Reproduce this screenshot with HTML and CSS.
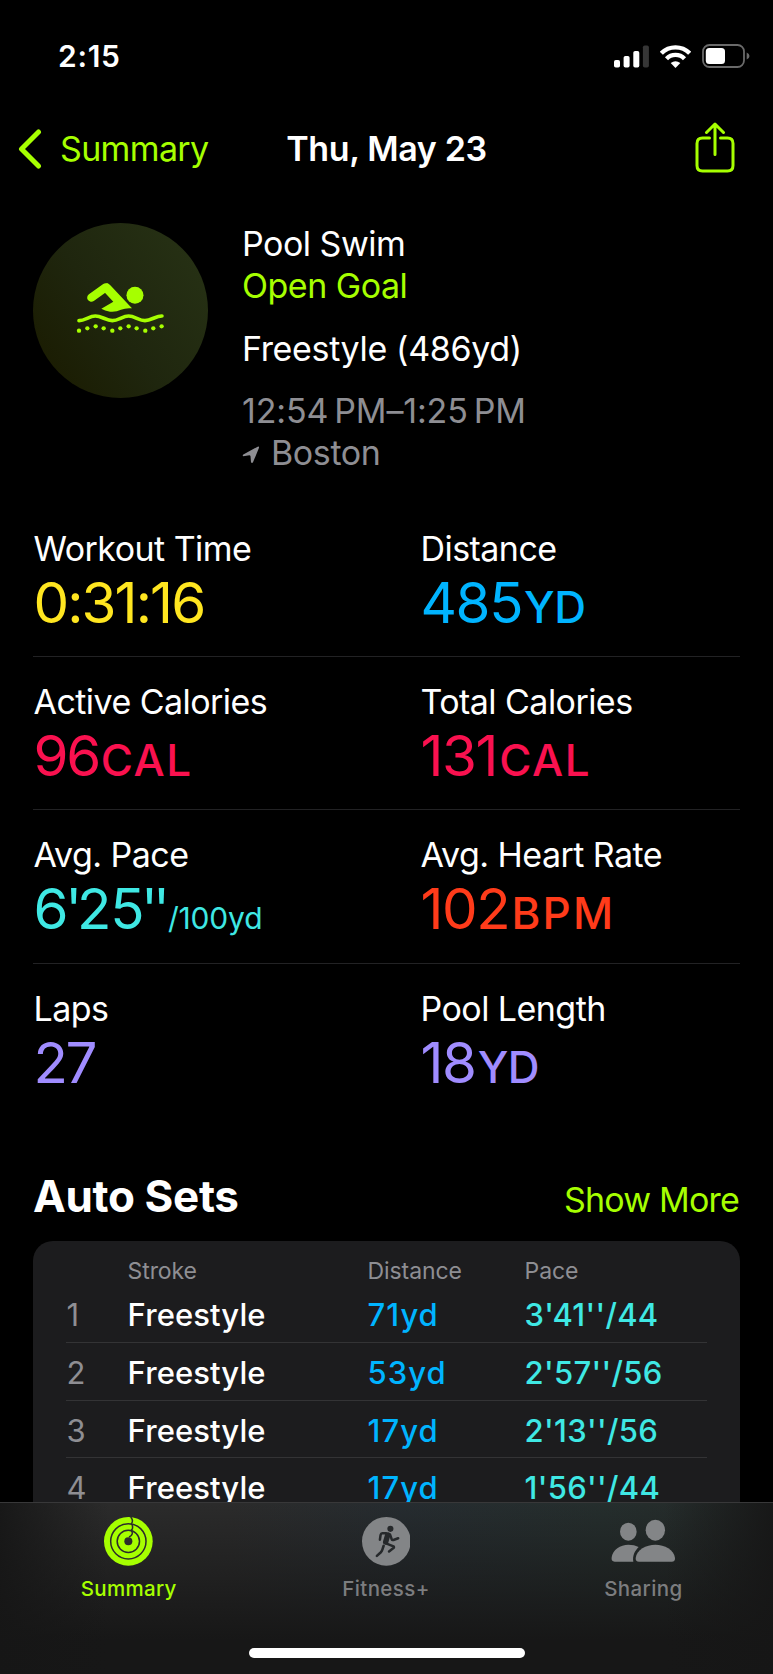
FILE: index.html
```
<!DOCTYPE html>
<html lang="en">
<head>
    <meta charset="UTF-8">
    <meta name="viewport" content="width=device-width, initial-scale=1.0">
    <title>Pool Swim - Thu, May 23</title>
    <link rel="stylesheet" href="styles.css">
</head>
<body>

    <div class="phone">
        <!-- Status bar -->
        <div class="status-bar">
            <span class="time">2:15</span>
            <div class="status-icons">
                <svg class="signal" viewBox="0 0 35 23">
                    <rect x="0" y="15" width="6" height="7.5" rx="1.8" fill="#fff"/>
                    <rect x="9.6" y="11" width="6" height="11.5" rx="1.8" fill="#fff"/>
                    <rect x="19.3" y="6" width="6" height="16.5" rx="1.8" fill="#fff"/>
                    <rect x="28.9" y="0.5" width="6" height="22" rx="1.8" fill="#363636"/>
                </svg>
                <svg class="wifi" viewBox="0 0 93 69">
                    <g fill="none" stroke="#fff" stroke-width="13">
                        <path d="M4 25C27 1 66 1 89 25"/>
                        <path d="M19.500 41C34 26 59 26 73.500 41"/>
                    </g>
                    <path d="M32 54Q46.500 43 61 54L46.500 69Z" fill="#fff"/>
                </svg>
                <svg class="battery" viewBox="0 0 48 24">
                    <rect x="1" y="1" width="41" height="22" rx="6.500" fill="none" stroke="#6a6a6a" stroke-width="1.8"/>
                    <rect x="3.800" y="3.900" width="19.200" height="16" rx="3.500" fill="#fff"/>
                    <path d="M44.700 8.500Q47.500 9.500 47.500 12T44.700 15.500Z" fill="#6a6a6a"/>
                </svg>
            </div>
        </div>

        <!-- Navigation -->
        <div class="nav">
            <a class="back">
                <svg class="chevron" viewBox="0 0 24 40"><path d="M20.500 3L3.500 20L20.500 37"/></svg>
                <span>Summary</span>
            </a>
            <h1>Thu, May 23</h1>
            <svg class="share" viewBox="0 0 40 52">
                <path d="M14.500 16H7.500Q2 16 2 21.500V43.500Q2 49 7.500 49H32.500Q38 49 38 43.500V21.500Q38 16 32.500 16H25.500"/>
                <path d="M20 32.500V2.500M11.500 10.500L20 2L28.500 10.500"/>
            </svg>
        </div>

        <!-- Workout info -->
        <div class="workout">
            <div class="badge">
                <svg class="swimmer" viewBox="170 215 268 160">
                    <path d="M216 265L259 234" stroke-width="25"/>
                    <path d="M262 221Q268 222 273 228L338 297Q320 295 305 301Q290 309 272 307Q256 304 246 298L282 277L254 247Z" class="solid"/>
                    <circle cx="347" cy="258" r="25.500" class="solid"/>
                    <path d="M179 334C197 334 210 320 228 320S261 334 279 334S310 320 328 320S359 334 377 334S410 320 428 320" stroke-width="11"/>
                    <g class="solid">
                        <circle cx="179" cy="364" r="6.500"/>
                        <circle cx="204" cy="357" r="6.500"/>
                        <circle cx="229" cy="351" r="6.500"/>
                        <circle cx="253" cy="357" r="6.500"/>
                        <circle cx="279" cy="364" r="6.500"/>
                        <circle cx="303" cy="357" r="6.500"/>
                        <circle cx="328" cy="351" r="6.500"/>
                        <circle cx="352" cy="357" r="6.500"/>
                        <circle cx="378" cy="364" r="6.500"/>
                        <circle cx="402" cy="357" r="6.500"/>
                        <circle cx="427" cy="351" r="6.500"/>
                    </g>
                </svg>
            </div>
            <div class="info">
                <p>Pool Swim</p>
                <p class="goal">Open Goal</p>
                <p class="stroke-type">Freestyle (486yd)</p>
                <p class="muted hours">12:54&#8201;PM–1:25&#8201;PM</p>
                <p class="muted place">
                    <svg class="arrow" viewBox="0 0 54 54"><path d="M4 25.500L47 2Q52 0 51 5L33 49Q30 53 27 49L25.500 31Q25 28 22 28L4 30.500Q0 29 4 25.500Z"/></svg>
                    <span>Boston</span>
                </p>
            </div>
        </div>

        <!-- Stats -->
        <div class="stats">
            <div class="stat-row">
                <div class="stat">
                    <div class="label">Workout Time</div>
                    <div class="value yellow clock">0:31:16</div>
                </div>
                <div class="stat">
                    <div class="label">Distance</div>
                    <div class="value blue">485<span class="unit">YD</span></div>
                </div>
            </div>
            <div class="stat-row">
                <div class="stat">
                    <div class="label">Active Calories</div>
                    <div class="value pink short">96<span class="unit wide">CAL</span></div>
                </div>
                <div class="stat">
                    <div class="label">Total Calories</div>
                    <div class="value pink">131<span class="unit wide">CAL</span></div>
                </div>
            </div>
            <div class="stat-row">
                <div class="stat">
                    <div class="label">Avg. Pace</div>
                    <div class="value teal">6<span class="tick">'</span>25<span class="tick">''</span><span class="per">/100yd</span></div>
                </div>
                <div class="stat">
                    <div class="label">Avg. Heart Rate</div>
                    <div class="value red">102<span class="unit wider">BPM</span></div>
                </div>
            </div>
            <div class="stat-row">
                <div class="stat">
                    <div class="label">Laps</div>
                    <div class="value purple short">27</div>
                </div>
                <div class="stat">
                    <div class="label">Pool Length</div>
                    <div class="value purple">18<span class="unit">YD</span></div>
                </div>
            </div>
        </div>

        <!-- Auto sets -->
        <div class="section-head">
            <h2>Auto Sets</h2>
            <a class="more">Show More</a>
        </div>
        <div class="card">
            <div class="set-row set-head">
                <span></span>
                <span>Stroke</span>
                <span>Distance</span>
                <span>Pace</span>
            </div>
            <div class="set-row">
                <span class="num">1</span>
                <span>Freestyle</span>
                <span class="dist">71yd</span>
                <span class="pace">3'41''/44</span>
            </div>
            <div class="set-row">
                <span class="num">2</span>
                <span>Freestyle</span>
                <span class="dist">53yd</span>
                <span class="pace">2'57''/56</span>
            </div>
            <div class="set-row">
                <span class="num">3</span>
                <span>Freestyle</span>
                <span class="dist">17yd</span>
                <span class="pace">2'13''/56</span>
            </div>
            <div class="set-row">
                <span class="num">4</span>
                <span>Freestyle</span>
                <span class="dist">17yd</span>
                <span class="pace">1'56''/44</span>
            </div>
        </div>

        <!-- Tab bar -->
        <div class="tab-bar">
            <div class="tabs">
                <div class="tab active">
                    <svg class="tab-icon" viewBox="0 0 146 146">
                        <circle cx="73" cy="73" r="73" fill="#a6ff00"/>
                        <g fill="none" stroke="#2b2b2b" stroke-width="4.500">
                            <circle cx="73" cy="73" r="53"/>
                            <circle cx="73" cy="73" r="33.500"/>
                            <path d="M80 0C87 8 87 14 82 20C87 27 87 34 82 40C87 47 86 55 75 60"/>
                        </g>
                        <circle cx="73" cy="73" r="12" fill="#2b2b2b"/>
                    </svg>
                    <span>Summary</span>
                </div>
                <div class="tab">
                    <svg class="tab-icon" viewBox="1083 82 144 144">
                        <circle cx="1155" cy="154" r="72" fill="#838587"/>
                        <g fill="none" stroke="#26292b" stroke-width="7.500" stroke-linecap="round" stroke-linejoin="round">
                            <circle cx="1167" cy="117" r="9" fill="#26292b" stroke="none"/>
                            <path d="M1154 130H1143Q1139 130 1138 135L1136 149"/>
                            <path d="M1166 134L1171 148Q1172 151 1176 150L1190 145"/>
                            <path d="M1159 135L1153 156" stroke-width="16"/>
                            <path d="M1154 160L1176 169Q1179 171 1176 174L1163 184"/>
                            <path d="M1147 167L1143 179Q1142 183 1138 187L1127 197"/>
                        </g>
                    </svg>
                    <span>Fitness+</span>
                </div>
                <div class="tab">
                    <svg class="tab-icon people" viewBox="862 82 200 146">
                        <g fill="#838587">
                            <ellipse cx="917" cy="126" rx="25" ry="27"/>
                            <ellipse cx="998" cy="121.500" rx="29" ry="31.500"/>
                            <path d="M949 216Q938 216 939 205C942 180 970 165 998 165S1054 180 1057 205Q1058 216 1047 216Z"/>
                            <path d="M876 216Q865 216 867 203C870 180 893 165 917 165Q935 165 948 172C936 184 929 198 932 216Z"/>
                        </g>
                    </svg>
                    <span>Sharing</span>
                </div>
            </div>
            <div class="home-indicator"></div>
        </div>
    </div>

</body>
</html>
```

FILE: styles.css
```
* {
    margin: 0;
    padding: 0;
    box-sizing: border-box;
}

body {
    font-family: Inter, "Liberation Sans", sans-serif;
    background-color: #000;
    color: #fff;
}

svg {
    display: block;
    flex-shrink: 0;
}

.phone {
    position: relative;
    width: 773px;
    height: 1674px;
    overflow: hidden;
}

/* Status bar */
.status-bar {
    display: flex;
    justify-content: space-between;
    height: 100px;
    padding: 38px 23px 0 58px;
}

.time {
    font-size: 30px;
    font-weight: 600;
    line-height: 36px;
    letter-spacing: 0.7px;
}

.status-icons {
    display: flex;
    align-items: center;
    height: 36px;
    gap: 11px;
}

.signal {
    width: 35px;
    height: 23px;
}

.wifi {
    width: 31px;
    height: 23px;
}

.battery {
    width: 48px;
    height: 24px;
}

/* Navigation */
.nav {
    display: grid;
    grid-template-columns: 1fr auto 1fr;
    align-items: center;
    height: 97px;
    padding: 0 38px 0 18px;
    font-size: 34px;
    line-height: 42px;
}

.back {
    display: flex;
    align-items: center;
    gap: 18px;
    color: #a6ff00;
    letter-spacing: -0.65px;
}

.chevron {
    width: 24px;
    height: 40px;
    fill: none;
    stroke: #a6ff00;
    stroke-width: 5;
    stroke-linecap: round;
    stroke-linejoin: round;
}

.nav h1 {
    font-size: 34px;
    font-weight: 600;
    letter-spacing: -0.36px;
    padding-left: 20px;
}

.share {
    justify-self: end;
    width: 40px;
    height: 52px;
    margin-bottom: 2px;
    fill: none;
    stroke: #a6ff00;
    stroke-width: 3;
    stroke-linecap: round;
    stroke-linejoin: round;
}

/* Workout info */
.workout {
    display: flex;
    gap: 34px;
    height: 307px;
    padding: 25.500px 33px 0;
}

.badge {
    display: flex;
    align-items: center;
    justify-content: center;
    width: 175px;
    height: 175px;
    border-radius: 50%;
    background: linear-gradient(55deg, #1a1b00 5%, #1f260e 45%, #273215 95%);
}

.swimmer {
    width: 89.300px;
    height: 53.300px;
    margin-top: -4px;
    margin-left: 1px;
    fill: none;
    stroke: #a6ff00;
    stroke-linecap: round;
    stroke-linejoin: round;
}

.swimmer .solid {
    fill: #a6ff00;
    stroke: none;
}

.info {
    font-size: 34px;
    line-height: 42px;
    letter-spacing: -0.5px;
    padding-top: 0.500px;
}

.goal {
    color: #a6ff00;
}

.stroke-type {
    margin-top: 20.500px;
    letter-spacing: -0.35px;
}

.muted {
    color: #8e8e93;
}

.hours {
    margin-top: 20.500px;
    letter-spacing: -0.15px;
}

.place {
    display: flex;
    align-items: center;
    gap: 11px;
    letter-spacing: -0.4px;
}

.arrow {
    width: 18px;
    height: 18px;
    margin-top: 3px;
    fill: #8e8e93;
}

/* Stats */
.stats {
    padding: 0 33px;
}

.stat-row {
    display: grid;
    grid-template-columns: 387px 1fr;
    height: 153.200px;
    padding: 24px 0 0 0.500px;
    border-bottom: 1px solid #222224;
}

.stat-row:last-child {
    border-bottom: none;
}

.label {
    font-size: 34px;
    line-height: 42px;
    letter-spacing: -0.55px;
}

.value {
    height: 62px;
    margin-top: 2px;
    font-size: 56.500px;
    line-height: 62px;
    letter-spacing: -1.4px;
    white-space: nowrap;
}

.clock {
    letter-spacing: -1.9px;
}

.short {
    letter-spacing: -2.4px;
}

.tick {
    letter-spacing: -5px;
    margin-left: -2px;
}

.tick + .per {
    margin-left: 3px;
}

.unit {
    margin-left: 2px;
    font-size: 44px;
    font-weight: 500;
    line-height: 1;
    letter-spacing: -0.6px;
}

.wide {
    letter-spacing: 1.5px;
}

.wider {
    letter-spacing: 2.2px;
}

.per {
    font-size: 30px;
    line-height: 1;
    letter-spacing: -0.2px;
}

.yellow { color: #ffe620; }
.blue { color: #00b4ff; }
.pink { color: #fa114f; }
.teal { color: #3fe8e4; }
.red { color: #ff3b1a; }
.purple { color: #a08cff; }

/* Auto sets */
.section-head {
    display: flex;
    justify-content: space-between;
    align-items: baseline;
    height: 72px;
    margin-top: 52px;
    padding: 0 34px 0 33px;
}

.section-head h2 {
    font-size: 44px;
    font-weight: 700;
    line-height: 54px;
    letter-spacing: -0.35px;
}

.more {
    font-size: 34px;
    color: #a6ff00;
    letter-spacing: -0.8px;
}

.card {
    margin: 0 33px;
    height: 300px;
    padding: 17.500px 33px 0;
    border-radius: 20px;
    background-color: #1c1c1e;
}

.set-row {
    display: grid;
    grid-template-columns: 61px 240px 157px 1fr;
    height: 57.700px;
    padding-left: 0.600px;
    border-bottom: 1px solid #333335;
    font-size: 31px;
    font-weight: 500;
    line-height: 59px;
    letter-spacing: 0.1px;
}

.set-row:last-child {
    border-bottom: none;
}

.set-head {
    height: 27px;
    border-bottom: none;
    font-size: 23px;
    font-weight: 400;
    line-height: 27px;
    letter-spacing: -0.1px;
    color: #8e8e93;
}

.num {
    font-weight: 400;
    color: #8e8e93;
}

.dist {
    color: #00b4ff;
    letter-spacing: 1px;
}

.pace {
    color: #3fe8e4;
    letter-spacing: 0.3px;
}

/* Tab bar sits over the scrolled content */
.tab-bar {
    position: absolute;
    left: 0;
    bottom: 0;
    width: 100%;
    height: 172px;
    border-top: 1px solid #383839;
    background:
        linear-gradient(to right, rgba(22, 22, 22, 0.9), rgba(22, 22, 22, 0) 14%, rgba(22, 22, 22, 0) 86%, rgba(22, 22, 22, 0.9)),
        linear-gradient(to bottom, rgba(20, 20, 20, 0), #171717 80%),
        linear-gradient(to right, #2b2b2b 30%, #262c30 52%, #252e2d 78%, #252a29);
}

.tabs {
    display: grid;
    grid-template-columns: repeat(3, 1fr);
    width: 772px;
    padding-top: 14px;
}

.tab {
    display: flex;
    flex-direction: column;
    align-items: center;
    gap: 10px;
    font-size: 20.500px;
    font-weight: 500;
    line-height: 26px;
    letter-spacing: 0.4px;
    color: #7c7d7f;
}

.active {
    color: #a6ff00;
    letter-spacing: 0.3px;
}

.tab-icon {
    width: 48.700px;
    height: 48.700px;
}

.people {
    width: 66.700px;
}

.home-indicator {
    width: 276px;
    height: 10px;
    margin: 46px auto 0;
    border-radius: 5px;
    background-color: #fff;
}
```
